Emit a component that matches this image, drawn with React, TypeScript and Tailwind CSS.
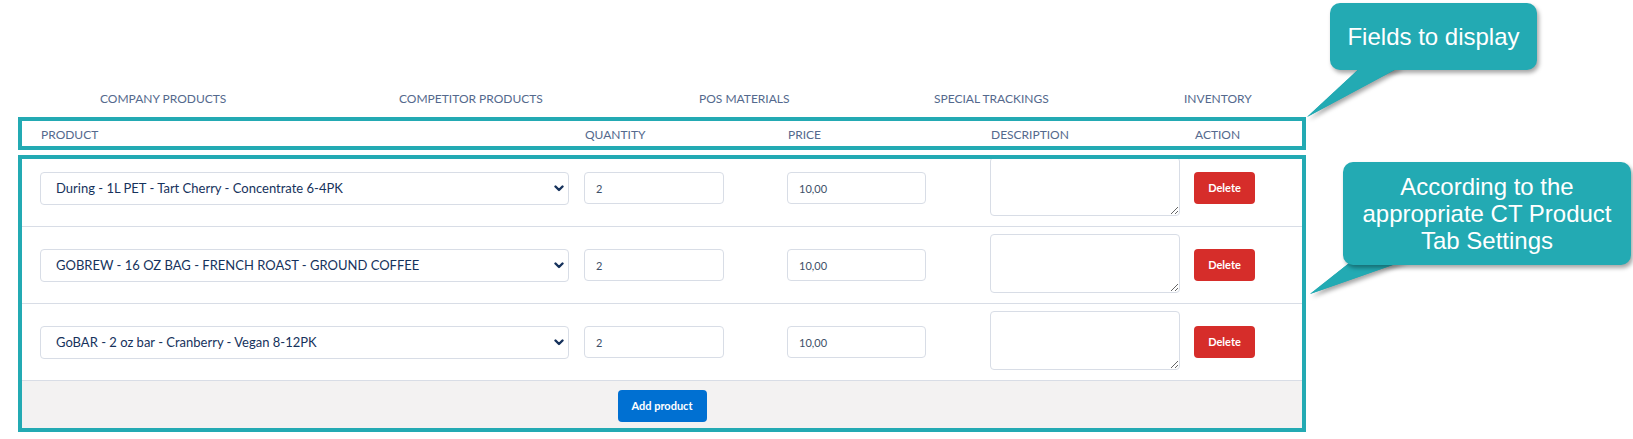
import React from "react";

const rows = [
  "During - 1L PET - Tart Cherry - Concentrate 6-4PK",
  "GOBREW - 16 OZ BAG - FRENCH ROAST - GROUND COFFEE",
  "GoBAR - 2 oz bar - Cranberry - Vegan 8-12PK",
];

function Chevron() {
  return (
    <svg width="10" height="7" viewBox="0 0 10 7" className="shrink-0">
      <path d="M1.5 1.5 L5 5 L8.5 1.5" fill="none" stroke="#16325c" strokeWidth="2.4" strokeLinecap="round" strokeLinejoin="round" />
    </svg>
  );
}

function Row({ label }: { label: string }) {
  return (
    <div className="grid grid-cols-[544px_203px_203px_204px_1fr] items-start pl-[18px] pt-[7px] pb-[10px] border-b border-[#d8dde6]">
      <div className="mt-[15px] w-[529px] h-[33px] border border-[#d8dde6] rounded-[4px] bg-white flex items-center justify-between pl-[15px] pr-[4px] text-[13px] text-[#16325c]">
        <span>{label}</span>
        <Chevron />
      </div>
      <input
        readOnly
        defaultValue="2"
        className="mt-[15px] w-[140px] h-[32px] border border-[#d8dde6] rounded-[4px] bg-white pl-[11px] text-[11px] text-[#3e5068] outline-none"
      />
      <input
        readOnly
        defaultValue="10,00"
        className="mt-[15px] w-[139px] h-[32px] border border-[#d8dde6] rounded-[4px] bg-white pl-[11px] text-[11px] text-[#3e5068] outline-none"
      />
      <textarea
        readOnly
        className="block w-[190px] h-[59px] border border-[#d8dde6] rounded-[4px] bg-white outline-none"
      />
      <button className="mt-[15px] w-[61px] h-[32px] rounded-[4px] bg-[#d62d2a] text-white text-[11px] font-bold">
        Delete
      </button>
    </div>
  );
}

export default function App() {
  const tabs: [string, string][] = [
    ["COMPANY PRODUCTS", "w-[299px]"],
    ["COMPETITOR PRODUCTS", "w-[300px]"],
    ["POS MATERIALS", "w-[235px]"],
    ["SPECIAL TRACKINGS", "w-[250px]"],
    ["INVENTORY", "w-[120px]"],
  ];
  return (
    <div className="relative w-[1633px] h-[439px] overflow-hidden bg-white font-['Lato',sans-serif]">
      <div className="pt-[90px]">
        <div className="flex pl-[100px] h-[18px] leading-[18px] text-[12px] text-[#54698d]">
          {tabs.map(([t, w]) => (
            <div key={t} className={w}>
              {t}
            </div>
          ))}
        </div>

        <div className="ml-[22px] w-[1280px]">
          <div className="grid grid-cols-[544px_203px_203px_204px_1fr] pl-[18px] pt-[18px] pb-[5px] border-b border-[#d8dde6] text-[12px] leading-[18px] text-[#54698d]">
            <div className="pl-px">PRODUCT</div>
            <div className="pl-px">QUANTITY</div>
            <div className="pl-px">PRICE</div>
            <div className="pl-px">DESCRIPTION</div>
            <div className="pl-px">ACTION</div>
          </div>
          {rows.map((r) => (
            <Row key={r} label={r} />
          ))}
          <div className="flex justify-center bg-[#f3f2f2] pt-[9px] pb-[9px]">
            <button className="w-[89px] h-[32px] rounded-[4px] bg-[#0070d2] text-white text-[11px] font-bold">
              Add product
            </button>
          </div>
        </div>
      </div>

      {/* annotation frames */}
      <div className="absolute left-[18px] top-[117px] w-[1288px] h-[33px] border-4 border-[#23aab3]" />
      <div className="absolute left-[18px] top-[155px] w-[1288px] h-[277px] border-4 border-[#23aab3]" />

      {/* callout tails with shadow */}
      <svg className="absolute left-0 top-0 drop-shadow-[2px_3px_2px_rgba(0,0,0,0.35)]" width="1633" height="439">
        <polygon points="1362,66 1402,66 1307,117" fill="#23aab3" />
        <polygon points="1353,260 1407,260 1310,294" fill="#23aab3" />
      </svg>

      {/* callout 1 */}
      <div className="absolute left-[1330px] top-[3px] w-[207px] h-[67px] rounded-[10px] bg-[#23aab3] shadow-[2px_3px_4px_rgba(0,0,0,0.35)] flex items-center justify-center text-white text-[24px] font-['Liberation_Sans',Arial,sans-serif]">
        Fields to display
      </div>
      <svg className="absolute left-0 top-0" width="1633" height="439">
        <polygon points="1362,66 1402,66 1307,117" fill="#23aab3" />
        <polygon points="1353,260 1407,260 1310,294" fill="#23aab3" />
      </svg>

      {/* callout 2 */}
      <div className="absolute left-[1343px] top-[162px] w-[288px] h-[103px] rounded-[10px] bg-[#23aab3] shadow-[2px_3px_4px_rgba(0,0,0,0.35)] flex flex-col items-center justify-center text-white text-[24px] leading-[27px] text-center font-['Liberation_Sans',Arial,sans-serif]">
        <div>According to the</div>
        <div>appropriate CT Product</div>
        <div>Tab Settings</div>
      </div>
    </div>
  );
}
